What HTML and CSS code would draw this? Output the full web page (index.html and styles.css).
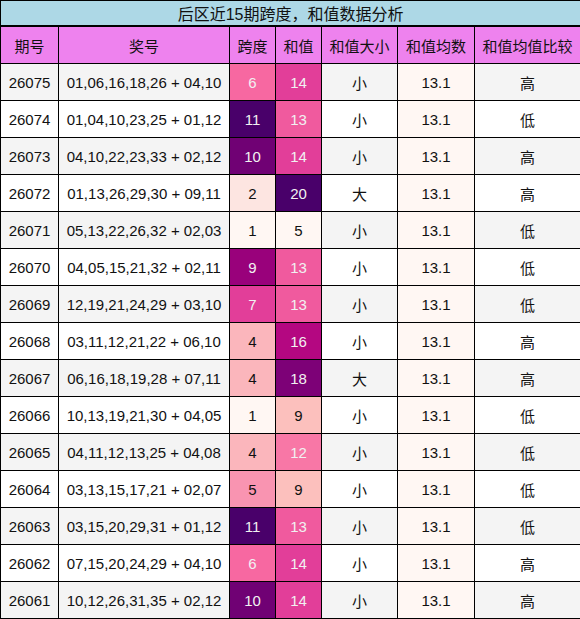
FILE: index.html
```html
<!DOCTYPE html>
<html>

<head>
    <title>后区近15期跨度，和值数据分析</title>
    <meta name="viewport" content="width=device-width, initial-scale=1" charset="UTF-8">
    <link rel="stylesheet" href="styles.css">
</head>

<body>
    <table class="stats">
        <colgroup>
            <col class="c-issue">
            <col class="c-nums">
            <col class="c-span">
            <col class="c-sum">
            <col class="c-size">
            <col class="c-avg">
            <col class="c-cmp">
        </colgroup>
        <thead>
            <tr class="caption-row">
                <th colspan="7">后区近15期跨度，和值数据分析</th>
            </tr>
            <tr class="head-row">
                <th>期号</th>
                <th>奖号</th>
                <th>跨度</th>
                <th>和值</th>
                <th>和值大小</th>
                <th>和值均数</th>
                <th>和值均值比较</th>
            </tr>
        </thead>
        <tbody>
            <tr><td>26075</td><td>01,06,16,18,26 + 04,10</td><td class="lt" style="background:#f768a1">6</td><td class="lt" style="background:#e23e99">14</td><td>小</td><td class="avg">13.1</td><td>高</td></tr>
            <tr><td>26074</td><td>01,04,10,23,25 + 01,12</td><td class="lt" style="background:#49006a">11</td><td class="lt" style="background:#f05a9e">13</td><td>小</td><td class="avg">13.1</td><td>低</td></tr>
            <tr><td>26073</td><td>04,10,22,23,33 + 02,12</td><td class="lt" style="background:#700174">10</td><td class="lt" style="background:#e23e99">14</td><td>小</td><td class="avg">13.1</td><td>高</td></tr>
            <tr><td>26072</td><td>01,13,26,29,30 + 09,11</td><td style="background:#fde5e1">2</td><td class="lt" style="background:#49006a">20</td><td>大</td><td class="avg">13.1</td><td>高</td></tr>
            <tr><td>26071</td><td>05,13,22,26,32 + 02,03</td><td style="background:#fff7f3">1</td><td style="background:#fff7f3">5</td><td>小</td><td class="avg">13.1</td><td>低</td></tr>
            <tr><td>26070</td><td>04,05,15,21,32 + 02,11</td><td class="lt" style="background:#99017b">9</td><td class="lt" style="background:#f05a9e">13</td><td>小</td><td class="avg">13.1</td><td>低</td></tr>
            <tr><td>26069</td><td>12,19,21,24,29 + 03,10</td><td class="lt" style="background:#e23e99">7</td><td class="lt" style="background:#f05a9e">13</td><td>小</td><td class="avg">13.1</td><td>低</td></tr>
            <tr><td>26068</td><td>03,11,12,21,22 + 06,10</td><td style="background:#fbb6bc">4</td><td class="lt" style="background:#b40781">16</td><td>小</td><td class="avg">13.1</td><td>高</td></tr>
            <tr><td>26067</td><td>06,16,18,19,28 + 07,11</td><td style="background:#fbb6bc">4</td><td class="lt" style="background:#7d0177">18</td><td>大</td><td class="avg">13.1</td><td>高</td></tr>
            <tr><td>26066</td><td>10,13,19,21,30 + 04,05</td><td style="background:#fff7f3">1</td><td style="background:#fcc0bd">9</td><td>小</td><td class="avg">13.1</td><td>低</td></tr>
            <tr><td>26065</td><td>04,11,12,13,25 + 04,08</td><td style="background:#fbb6bc">4</td><td class="lt" style="background:#f877a6">12</td><td>小</td><td class="avg">13.1</td><td>低</td></tr>
            <tr><td>26064</td><td>03,13,15,17,21 + 02,07</td><td style="background:#f994b1">5</td><td style="background:#fcc0bd">9</td><td>小</td><td class="avg">13.1</td><td>低</td></tr>
            <tr><td>26063</td><td>03,15,20,29,31 + 01,12</td><td class="lt" style="background:#49006a">11</td><td class="lt" style="background:#f05a9e">13</td><td>小</td><td class="avg">13.1</td><td>低</td></tr>
            <tr><td>26062</td><td>07,15,20,24,29 + 04,10</td><td class="lt" style="background:#f768a1">6</td><td class="lt" style="background:#e23e99">14</td><td>小</td><td class="avg">13.1</td><td>高</td></tr>
            <tr><td>26061</td><td>10,12,26,31,35 + 02,12</td><td class="lt" style="background:#700174">10</td><td class="lt" style="background:#e23e99">14</td><td>小</td><td class="avg">13.1</td><td>高</td></tr>
        </tbody>
    </table>
</body>

</html>
```

FILE: styles.css
```css
body {
    margin: 0;
    font-family: "Liberation Sans", "Noto Sans CJK SC", sans-serif;
    color: #111111;
}

.stats {
    width: 580px;
    border-collapse: collapse;
    table-layout: fixed;
    font-size: 15px;
}

.c-issue { width: 58px; }
.c-nums { width: 171px; }
.c-span { width: 46px; }
.c-sum { width: 46px; }
.c-size { width: 76px; }
.c-avg { width: 77px; }
.c-cmp { width: 106px; }

.stats th,
.stats td {
    border: 1px solid #000000;
    padding: 0;
    text-align: center;
    font-weight: normal;
    white-space: nowrap;
}

.caption-row th {
    height: 24px;
    background-color: #add8e6;
    font-size: 16px;
    border-bottom: 2px solid #000000;
}

.head-row th {
    height: 36px;
    background-color: #ee82ee;
}

.stats td {
    height: 36px;
    background-color: #ffffff;
}

.stats tbody tr:nth-child(odd) td {
    background-color: #f4f4f4;
}

.stats tbody tr td.avg {
    background-color: #fff7f3;
}

.stats td.lt {
    color: #f1f1f1;
}
```
